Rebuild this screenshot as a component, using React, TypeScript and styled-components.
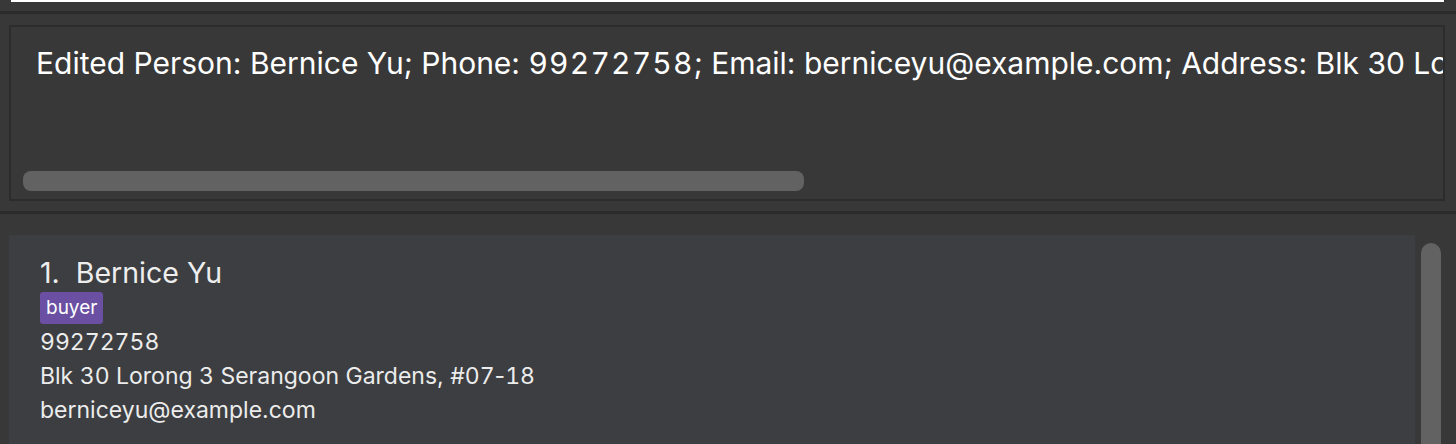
import React from "react";
import styled, { createGlobalStyle } from "styled-components";

const Global = createGlobalStyle`
  html, body { margin: 0; padding: 0; background: #383838; }
  body {
    font-family: Inter, "Noto Sans", sans-serif;
    overflow: hidden;
  }
  #root { width: 1456px; height: 444px; overflow: hidden; }
`;

const Page = styled.div`
  width: 1456px;
  height: 444px;
  display: flex;
  flex-direction: column;
  background: #383838;
  overflow: hidden;
`;

const CommandArea = styled.div`
  height: 11px;
  padding: 0 11px 0 11px;
  box-sizing: border-box;
`;

const CommandField = styled.div`
  height: 2px;
  background: #ffffff;
  border-right: 1px solid #2e2e2e;
`;

const Divider = styled.div`
  height: 3px;
  background: #2b2b2b;
  flex-shrink: 0;
`;

const ResultArea = styled.div`
  padding: 11px 11px 10px 9px;
  box-sizing: border-box;
`;

const ResultBox = styled.div`
  height: 176px;
  box-sizing: border-box;
  border: 2px solid #2c2c2c;
  display: flex;
  flex-direction: column;
  overflow: hidden;
  position: relative;
`;

const ResultText = styled.div`
  padding: 18px 0 0 25px;
  color: #ffffff;
  font-size: 30px;
  white-space: nowrap;
  flex: 1;
`;

const Num = styled.span<{ $spacing?: number }>`
  font-variant-numeric: tabular-nums;
  letter-spacing: ${(p) => p.$spacing ?? 0}px;
`;

const HScroll = styled.div`
  position: absolute;
  left: 12px;
  bottom: 8px;
  width: 781px;
  height: 20px;
  border-radius: 8px;
  background: #626262;
`;

const ListArea = styled.div`
  flex: 1;
  display: flex;
  padding: 21px 0 0 9px;
  gap: 6px;
  overflow: hidden;
`;

const Card = styled.div`
  width: 1406px;
  background: #3c3e41;
  box-sizing: border-box;
  padding: 21px 0 0 31px;
  display: flex;
  flex-direction: column;
  color: #ececec;
`;

const Name = styled.div`
  font-size: 28.5px;
  line-height: 34px;
  color: #eeeeee;
  white-space: pre;
`;

const Tags = styled.div`
  display: flex;
  gap: 6px;
  margin: 2px 0 1px;
`;

const Tag = styled.span`
  background: #6a4fa3;
  color: #ffffff;
  font-size: 19px;
  line-height: 32px;
  padding: 0 6px;
  border-radius: 3px;
`;

const Field = styled.div`
  font-size: 23px;
  line-height: 34px;
  color: #ececec;
`;

const VScroll = styled.div`
  width: 20px;
  margin-top: 8px;
  border-radius: 10px 10px 0 0;
  background: #626262;
  height: 400px;
`;

export default function App() {
  return (
    <Page>
      <Global />
      <CommandArea>
        <CommandField />
      </CommandArea>
      <Divider />
      <ResultArea>
        <ResultBox>
          <ResultText>
            Edited Person: Bernice Yu; Phone: <Num $spacing={1.2}>99272758</Num>; Email:
            berniceyu@example.com; Address: Blk 30 Lorong 3 Serangoon Gardens, #07-18; Tags: [buyer]
          </ResultText>
          <HScroll />
        </ResultBox>
      </ResultArea>
      <Divider />
      <ListArea>
        <Card>
          <Name>{"1.  Bernice Yu"}</Name>
          <Tags>
            <Tag>buyer</Tag>
          </Tags>
          <Field>
            <Num>99272758</Num>
          </Field>
          <Field>
            Blk <Num>30</Num> Lorong <Num>3</Num> Serangoon Gardens, #<Num>07</Num>-<Num>18</Num>
          </Field>
          <Field>berniceyu@example.com</Field>
        </Card>
        <VScroll />
      </ListArea>
    </Page>
  );
}
